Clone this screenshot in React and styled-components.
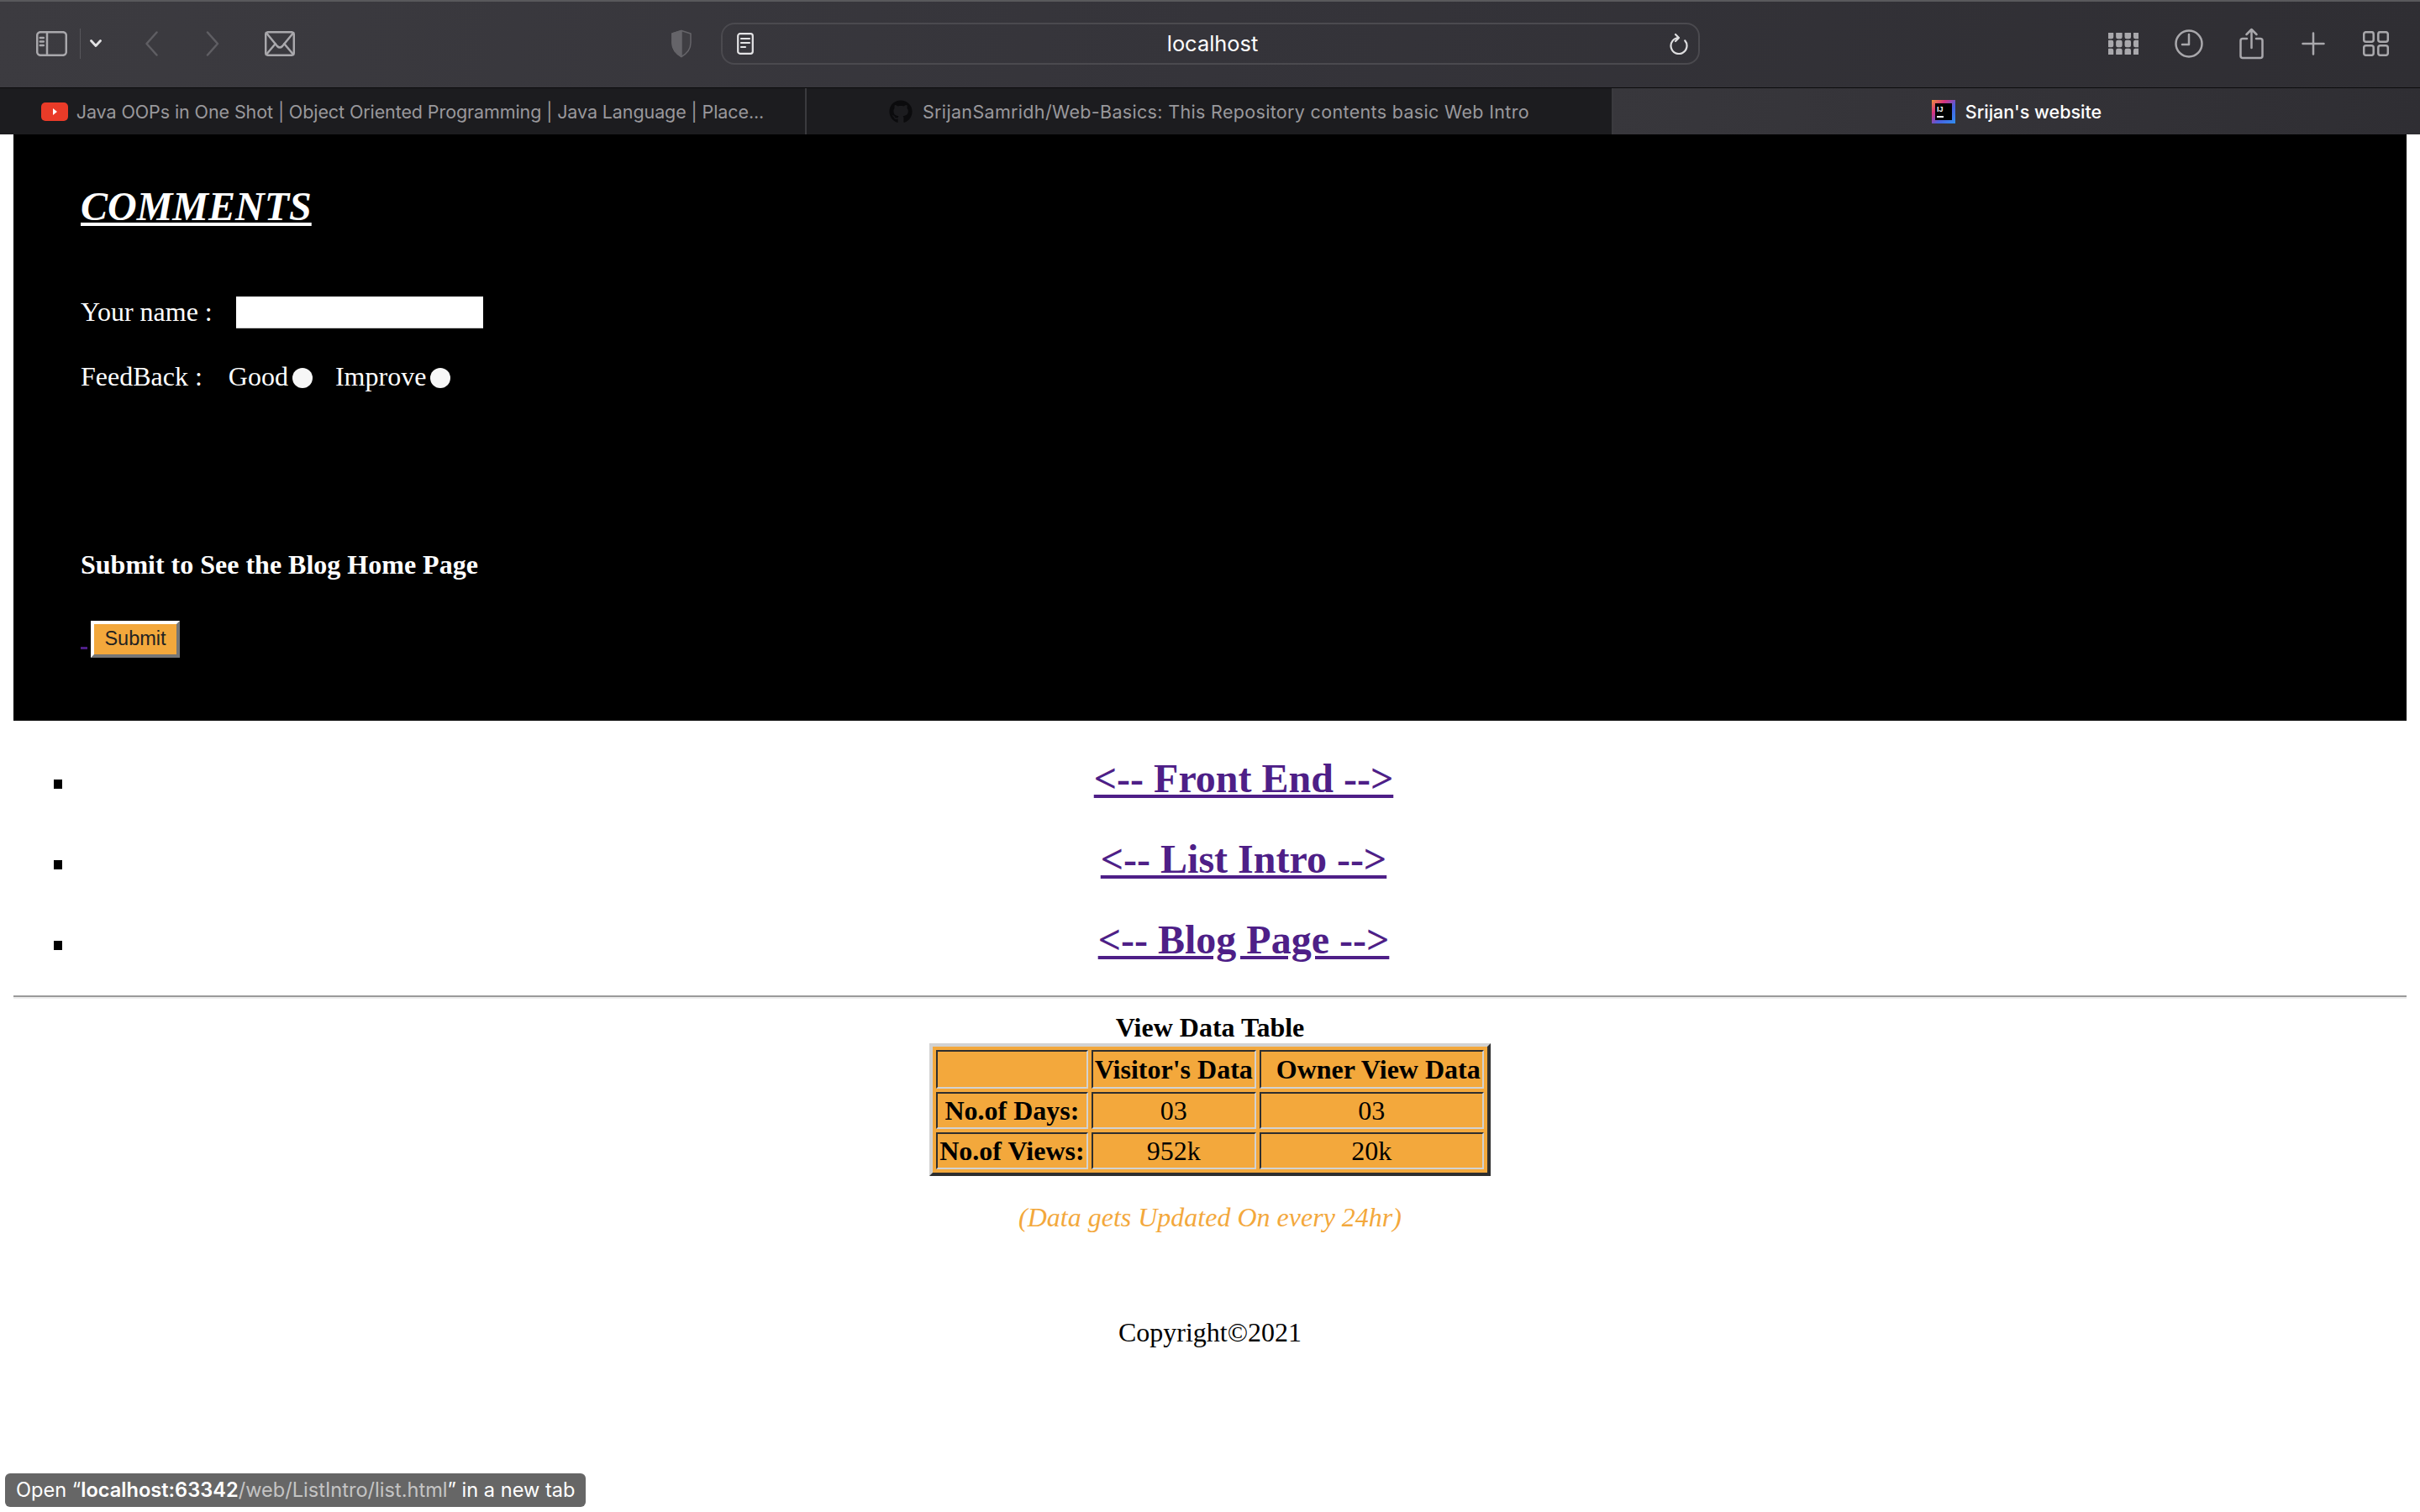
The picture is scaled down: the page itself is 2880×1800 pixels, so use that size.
import React from 'react'
import styled, { createGlobalStyle } from 'styled-components'
import { FaGithub } from 'react-icons/fa'

const GlobalStyle = createGlobalStyle`
  html, body {
    margin: 0;
    padding: 0;
    background: #fff;
  }
  * {
    box-sizing: border-box;
  }
`

const Screen = styled.div`
  position: relative;
  display: flex;
  flex-direction: column;
  width: 2880px;
  height: 1800px;
  overflow: hidden;
  font-family: "Liberation Serif", "Times New Roman", serif;
  font-size: 32px;
  color: #000;
`

const Toolbar = styled.header`
  display: flex;
  align-items: center;
  height: 105px;
  padding: 0 38px 3px 43px;
  background: linear-gradient(100deg, #3c3b40 0%, #35343a 50%, #2f2e33 100%);
  border-top: 2px solid #59595c;
  border-bottom: 1px solid #0c0c0d;
`

const ToolIcon = styled.svg`
  flex: none;
  margin-left: ${p => p.$gap || 0}px;
  justify-self: ${p => p.$end ? 'end' : 'auto'};
  fill: none;
  stroke: ${p => p.$color || '#a9a8ac'};
  stroke-width: ${p => p.$weight || 2.5};
  stroke-linecap: round;
  stroke-linejoin: round;
`

const Divider = styled.span`
  flex: none;
  width: 1px;
  height: 36px;
  margin-left: 15px;
  background: #57565b;
`

const AddressBar = styled.div`
  flex: none;
  display: grid;
  grid-template-columns: 60px 1fr 60px;
  align-items: center;
  width: 1165px;
  height: 50px;
  margin-left: 33px;
  padding: 0 12px 0 17px;
  border: 2px solid #4b4a4f;
  border-radius: 16px;
`

const AddressText = styled.span`
  text-align: center;
  font-family: Inter, "Liberation Sans", sans-serif;
  font-size: 25.4px;
  color: #fff;
`

const TabBar = styled.nav`
  display: grid;
  grid-template-columns: 960px 960px 1fr;
  height: 55px;
  background: #1c1c1f;
`

const Tab = styled.div`
  display: flex;
  align-items: center;
  justify-content: center;
  gap: ${p => p.$gap}px;
  border-right: ${p => (p.$active ? 'none' : '2px solid #3a3a3e')};
  background: ${p => (p.$active ? 'linear-gradient(100deg, #38373c, #2f2e33)' : '#1c1c1f')};
  font-family: Inter, "Liberation Sans", sans-serif;
  font-size: 21.5px;
  font-weight: ${p => (p.$active ? 500 : 400)};
  letter-spacing: ${p => p.$track || 0}px;
  color: ${p => (p.$active ? '#fff' : '#99989c')};
  white-space: nowrap;
`

const Page = styled.main`
  flex: 1;
  min-height: 0;
  padding: 0 16px;
  background: #fff;
`

const CommentSection = styled.section`
  height: 698px;
  padding: 58px 80px 0;
  background: #000;
  color: #fff;
`

const CommentTitle = styled.h1`
  margin: 0 0 78px;
  font-size: 48px;
  line-height: 55px;
  font-weight: bold;
  font-style: italic;
  text-decoration: underline;
`

const FormRow = styled.div`
  display: flex;
  align-items: center;
  height: 40px;
  margin-bottom: 37px;
  line-height: 37px;
  white-space: nowrap;
`

const NameInput = styled.input`
  width: 294px;
  height: 38px;
  margin: 2px 0 0 28px;
  border: none;
  border-bottom: 1px solid #c8c8c8;
  background: #fff;
`

const Choice = styled.label`
  margin-left: ${p => p.$gap}px;
`

const Radio = styled.input`
  appearance: none;
  flex: none;
  width: 24px;
  height: 24px;
  margin: 3px 0 0 5px;
  border-radius: 50%;
  background: #f7f7f7;
`

const SubmitTitle = styled.h4`
  margin: 186px 0 44px;
  font-size: 32px;
  line-height: 37px;
  font-weight: bold;
`

const SubmitLine = styled.div`
  line-height: 44px;
`

const BlankLink = styled.a`
  color: #4e1f87;
  text-decoration: underline;
`

const SubmitButton = styled.button`
  width: 106px;
  height: 44px;
  margin-left: 4px;
  padding: 0;
  border: 4px solid;
  border-color: #fff #767676 #767676 #fff;
  background: #f3a83c;
  font-family: "Liberation Sans", Arial, sans-serif;
  font-size: 23.5px;
  color: #222;
`

const LinkList = styled.ul`
  margin: 0;
  padding: 0 0 0 80px;
  list-style: none;
`

const LinkItem = styled.li`
  position: relative;
  text-align: center;

  &::before {
    content: "";
    position: absolute;
    left: -32px;
    top: 29px;
    width: 10px;
    height: 11px;
    background: #000;
  }
`

const LinkHeading = styled.h2`
  margin: 41px 0;
  font-size: 48px;
  line-height: 55px;
  font-weight: bold;
`

const PageLink = styled.a`
  color: #4e1f87;
  text-decoration: underline;
`

const Rule = styled.hr`
  height: 4px;
  margin: -2px 0 16px;
  border: none;
  border-top: 2px solid #9a9a9a;
  border-bottom: 2px solid #eeeeee;
`

const DataTable = styled.table`
  margin: 0 auto;
  border: 4px solid;
  border-color: #d2d2d2 #2e2e2e #2e2e2e #d2d2d2;
  border-spacing: 4px;
  background: #f3a83c;
  font-size: 32px;
  line-height: 36px;

  caption {
    line-height: 37px;
    font-weight: bold;
  }

  th, td {
    padding: 2px;
    border: 2px solid;
    border-color: #2e2e2e #d2d2d2 #d2d2d2 #2e2e2e;
    text-align: center;
  }

  thead th {
    padding: 3px 2px;
  }
`

const UpdateNote = styled.p`
  margin: 31px 0 100px;
  text-align: center;
  font-style: italic;
  line-height: 37px;
  color: #f3a83c;
`

const Copyright = styled.p`
  margin: 0;
  text-align: center;
  line-height: 37px;
`

const StatusBubble = styled.div`
  position: absolute;
  left: 6px;
  bottom: 6px;
  height: 40px;
  padding: 0 13px;
  border-radius: 6px;
  background: #666;
  font-family: Inter, "Liberation Sans", sans-serif;
  font-size: 23.6px;
  line-height: 40px;
  color: #fff;
  white-space: nowrap;

  b {
    font-weight: 600;
  }

  span {
    color: #c4c4c4;
  }
`

function App() {
  return (
    <Screen>
      <GlobalStyle />
      <Toolbar>
        <ToolIcon width="37" height="30" viewBox="0 0 37 30">
          <rect x="1.2" y="1.2" width="34.6" height="27.6" rx="4" />
          <path d="M13 1.2v27.600M4.800 8h4M4.800 12.500h4M4.800 17h4" />
        </ToolIcon>
        <Divider />
        <ToolIcon $gap={11} $color="#e2e2e4" $weight={2.8} width="14" height="9" viewBox="0 0 14 9">
          <path d="M1.500 1.500 7 7.500l5.500-6" />
        </ToolIcon>
        <ToolIcon $gap={52} $color="#5f5e63" width="15" height="30" viewBox="0 0 15 30">
          <path d="M13.500 1.500 1.500 15l12 13.500" />
        </ToolIcon>
        <ToolIcon $gap={57} $color="#5f5e63" width="16" height="30" viewBox="0 0 16 30">
          <path d="M2 1.500 14 15 2 28.500" />
        </ToolIcon>
        <ToolIcon $gap={54} width="36" height="30" viewBox="0 0 36 30">
          <rect x="1.200" y="1.200" width="33.600" height="27.600" rx="3" />
          <path d="M1.800 2 15 18q3 3 6 0L34.200 2M1.800 28l11-13M34.200 28l-11-13" />
        </ToolIcon>
        <ToolIcon $gap={446} $color="#656469" $weight={1.5} width="28" height="34" viewBox="0 0 28 34">
          <path d="M14 1.500 3 5v11c0 8 5 13 11 16.500C20 29 25 24 25 16V5z" fill="#3f3e43" />
          <path d="M14 1.500 3 5v11c0 8 5 13 11 16.500z" fill="#656469" />
        </ToolIcon>
        <AddressBar>
          <ToolIcon $color="#e4e4e6" $weight={2.2} width="20" height="26" viewBox="0 0 20 26">
            <rect x="1.200" y="1.200" width="17.600" height="23.600" rx="2.500" />
            <path d="M5 7h10M5 12h10M5 17h5" />
          </ToolIcon>
          <AddressText>localhost</AddressText>
          <ToolIcon $end $color="#dedee0" $weight={2.2} width="22" height="26" viewBox="0 0 22 26">
            <path d="M11 6A9.500 9.500 0 1 0 18.200 9.300M7 2l4 4-4 4" />
          </ToolIcon>
        </AddressBar>
        <ToolIcon $gap={486} $weight={0} width="36" height="26" viewBox="0 0 36 26">
          {[0, 1, 2].map(row => [0, 1, 2, 3].map(col => (
            <rect key={`${row}-${col}`} x={col * 10.400} y={row * 10} width="5" height="6" rx="1" fill="#a9a8ac" />
          )))}
        </ToolIcon>
        <ToolIcon $gap={43} width="34" height="34" viewBox="0 0 34 34">
          <circle cx="17" cy="17" r="15.500" />
          <path d="M17 6v12H9" />
        </ToolIcon>
        <ToolIcon $gap={43} width="29" height="38" viewBox="0 0 29 38">
          <path d="M9 13H4a2.500 2.500 0 0 0-2.500 2.500v18A2.500 2.500 0 0 0 4 36h21a2.500 2.500 0 0 0 2.500-2.500v-18A2.500 2.500 0 0 0 25 13h-5M14.500 24V2M8.500 8l6-6 6 6" />
        </ToolIcon>
        <ToolIcon $gap={45} width="28" height="28" viewBox="0 0 28 28">
          <path d="M14 1.500v25M1.500 14h25" />
        </ToolIcon>
        <ToolIcon $gap={45} width="31" height="30" viewBox="0 0 31 30">
          <rect x="1.200" y="1.200" width="11.500" height="11.500" rx="2.500" />
          <rect x="18.300" y="1.200" width="11.500" height="11.500" rx="2.500" />
          <rect x="1.200" y="17.300" width="11.500" height="11.500" rx="2.500" />
          <rect x="18.300" y="17.300" width="11.500" height="11.500" rx="2.500" />
        </ToolIcon>
      </Toolbar>
      <TabBar>
        <Tab $gap={10} $track={-0.1}>
          <svg width="32" height="22" viewBox="0 0 32 22">
            <rect width="32" height="22" rx="5" fill="#ea3b28" />
            <path d="M14 7l5 4-5 4z" fill="#fff" />
          </svg>
          Java OOPs in One Shot | Object Oriented Programming | Java Language | Place...
        </Tab>
        <Tab $gap={12} $track={0.33}>
          <FaGithub size={28} color="#0b0b0d" />
          SrijanSamridh/Web-Basics: This Repository contents basic Web Intro
        </Tab>
        <Tab $active $gap={12}>
          <svg width="28" height="28" viewBox="0 0 28 28">
            <defs>
              <linearGradient id="ij" x1="0" y1="0" x2="1" y2="1">
                <stop offset="0" stopColor="#f0923a" />
                <stop offset="0.3" stopColor="#d8337f" />
                <stop offset="0.6" stopColor="#4a5fe0" />
                <stop offset="1" stopColor="#2f8ff0" />
              </linearGradient>
            </defs>
            <rect width="28" height="28" fill="url(#ij)" />
            <rect x="4" y="4" width="20" height="20" fill="#000" />
            <text x="6" y="14" fontFamily="Liberation Sans" fontSize="9" fontWeight="bold" fill="#fff">IJ</text>
            <rect x="6" y="19" width="8" height="2" fill="#fff" />
          </svg>
          Srijan's website
        </Tab>
      </TabBar>
      <Page>
        <CommentSection>
          <CommentTitle>COMMENTS</CommentTitle>
          <FormRow>
            <label htmlFor="visitor">Your name :</label>
            <NameInput id="visitor" type="text" />
          </FormRow>
          <FormRow>
            <span>FeedBack :</span>
            <Choice $gap={31}>Good</Choice>
            <Radio type="radio" name="feedback" />
            <Choice $gap={27}>Improve</Choice>
            <Radio type="radio" name="feedback" />
          </FormRow>
          <SubmitTitle>Submit to See the Blog Home Page</SubmitTitle>
          <SubmitLine>
            <BlankLink href="#blog">&nbsp;</BlankLink>
            <SubmitButton type="button">Submit</SubmitButton>
          </SubmitLine>
        </CommentSection>
        <LinkList>
          <LinkItem><LinkHeading><PageLink href="#front">{'<-- Front End -->'}</PageLink></LinkHeading></LinkItem>
          <LinkItem><LinkHeading><PageLink href="#list">{'<-- List Intro -->'}</PageLink></LinkHeading></LinkItem>
          <LinkItem><LinkHeading><PageLink href="#blog">{'<-- Blog Page -->'}</PageLink></LinkHeading></LinkItem>
        </LinkList>
        <Rule />
        <DataTable>
          <caption>View Data Table</caption>
          <thead>
            <tr>
              <th></th>
              <th>Visitor's Data</th>
              <th>&nbsp;&nbsp;Owner View Data</th>
            </tr>
          </thead>
          <tbody>
            <tr>
              <th>No.of Days:</th>
              <td>03</td>
              <td>03</td>
            </tr>
            <tr>
              <th>No.of Views:</th>
              <td>952k</td>
              <td>20k</td>
            </tr>
          </tbody>
        </DataTable>
        <UpdateNote>(Data gets Updated On every 24hr)</UpdateNote>
        <Copyright>Copyright©2021</Copyright>
      </Page>
      <StatusBubble>
        Open “<b>localhost:63342</b><span>/web/ListIntro/list.html</span>” in a new tab
      </StatusBubble>
    </Screen>
  )
}

export default App
